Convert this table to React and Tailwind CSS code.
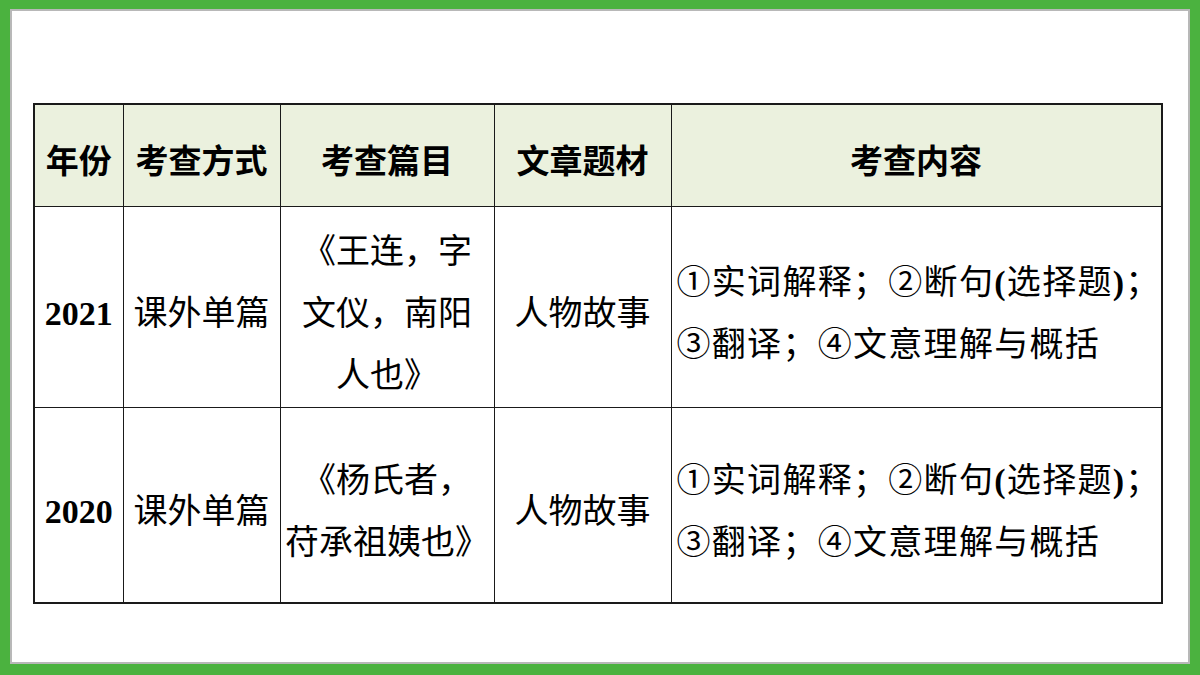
import React from "react";

const cjk = { fontFamily: '"Liberation Serif", "Noto Sans CJK SC", serif' };
const head = { fontFamily: '"Noto Sans CJK SC", "Noto Sans", sans-serif' };

const rows = [
  {
    year: "2021",
    way: "课外单篇",
    title: ["《王连，字", "文仪，南阳", "人也》"],
    theme: "人物故事",
  },
  {
    year: "2020",
    way: "课外单篇",
    title: ["《杨氏者，", "苻承祖姨也》"],
    theme: "人物故事",
  },
];

const Content = () => (
  <div className="pl-[5px] whitespace-nowrap leading-[62px] text-left tracking-[1.3px]">
    <div>
      ①实词解释；②断句<span className="font-bold">(</span>选择题<span className="font-bold">)</span>；
    </div>
    <div>③翻译；④文意理解与概括</div>
  </div>
);

const App = () => {
  return (
    <div className="w-[1200px] h-[675px] bg-[#4bb23f] pt-[9px] pl-[10px] pr-[10px] pb-[11px]">
      <div className="w-full h-full bg-white border-2 border-[#b8b8b8] pl-[21px] pt-[92px]">
        <table className="table-fixed border-collapse border-2 border-[#1a1a1a] text-black text-[34px]" style={cjk}>
          <colgroup>
            <col className="w-[89px]" />
            <col className="w-[157px]" />
            <col className="w-[214px]" />
            <col className="w-[177px]" />
            <col className="w-[488px]" />
          </colgroup>
          <thead>
            <tr className="h-[102px] bg-[#ebf1de]">
              {["年份", "考查方式", "考查篇目", "文章题材", "考查内容"].map((h) => (
                <th
                  key={h}
                  className="border border-[#1a1a1a] font-bold text-[33px] text-center pt-[8px] p-0 whitespace-nowrap"
                  style={head}
                >
                  {h}
                </th>
              ))}
            </tr>
          </thead>
          <tbody>
            {rows.map((r, i) => (
              <tr key={r.year} className={i === 0 ? "h-[198px]" : "h-[196px]"}>
                <td className="border border-[#1a1a1a] text-center font-bold pt-[14px] p-0">{r.year}</td>
                <td className="border border-[#1a1a1a] text-center pt-[14px] p-0">{r.way}</td>
                <td className="border border-[#1a1a1a] text-center leading-[62px] pt-[14px] p-0 whitespace-nowrap">
                  {r.title.map((t) => (
                    <div key={t}>{t}</div>
                  ))}
                </td>
                <td className="border border-[#1a1a1a] text-center pt-[14px] p-0">{r.theme}</td>
                <td className="border border-[#1a1a1a] pt-[14px] p-0">
                  <Content />
                </td>
              </tr>
            ))}
          </tbody>
        </table>
      </div>
    </div>
  );
};

export default App;
